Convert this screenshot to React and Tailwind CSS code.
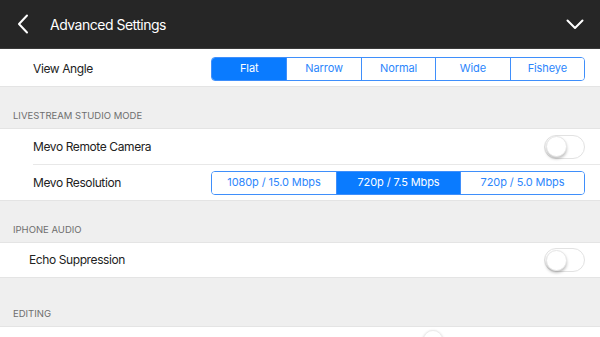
import React, { useState } from 'react';

const font = { fontFamily: 'Inter, "Liberation Sans", sans-serif' };

const Toggle = ({ on = false }) => (
    <div className={`w-[41px] h-[24px] rounded-full border border-[#e2e2e2] ${on ? 'bg-[#4cd964]' : 'bg-white'} flex items-center px-[1px]`}>
        <div className="w-[21px] h-[21px] rounded-full bg-white shadow-[0_2px_3px_rgba(0,0,0,0.25)] border border-[#e6e6e6]"></div>
    </div>
);

const Segmented = ({ options, selected, segWidth }) => (
    <div className="flex h-[24px] rounded-[4px] border border-[#3f8ffb] overflow-hidden">
        {options.map((opt, i) => (
            <div
                key={opt}
                className={`${segWidth} flex items-center justify-center text-[11px] tracking-[-0.1px] ${i > 0 ? 'border-l border-[#3f8ffb]' : ''} ${opt === selected ? 'bg-[#0a7bff] text-white' : 'bg-white text-[#2c86fc]'}`}
            >
                {opt}
            </div>
        ))}
    </div>
);

const SectionHeader = ({ title, height }) => (
    <div className={`${height} flex items-end pl-[13px] pb-[5px] bg-[#efefef] text-[9.5px] text-[#6e6e6e]`}>
        {title}
    </div>
);

const App = () => {
    const [angle] = useState('Flat');
    const [res] = useState('720p / 7.5 Mbps');

    return (
        <div className="w-[600px] h-[337px] overflow-hidden bg-[#efefef]" style={font}>
            {/* header */}
            <div className="h-[49px] bg-[#262626] border-b border-[#3a3a3a] flex items-center justify-between pl-[17px] pr-[16px]">
                <div className="flex items-center">
                    <svg width="12" height="20" viewBox="0 0 12 20" fill="none">
                        <path d="M10 1.5 L2 10 L10 18.5" stroke="white" strokeWidth="2" strokeLinecap="round" strokeLinejoin="round" />
                    </svg>
                    <span className="ml-[21px] text-[14px] tracking-[-0.5px] text-white">Advanced Settings</span>
                </div>
                <svg width="18" height="11" viewBox="0 0 18 11" fill="none">
                    <path d="M1.5 1.5 L9 9 L16.5 1.5" stroke="white" strokeWidth="2" strokeLinecap="round" strokeLinejoin="round" />
                </svg>
            </div>

            {/* view angle */}
            <div className="h-[38px] bg-white border-b border-[#e4e4e4] flex items-center justify-between pl-[33px] pr-[15px] pt-[2px]">
                <span className="text-[12px] tracking-[-0.4px] text-[#222]">View Angle</span>
                <Segmented options={['Flat', 'Narrow', 'Normal', 'Wide', 'Fisheye']} selected={angle} segWidth="w-[74.4px]" />
            </div>

            <SectionHeader title="LIVESTREAM STUDIO MODE" height="h-[41px]" />

            <div className="bg-white border-y border-[#e4e4e4]">
                <div className="pl-[33px]">
                    <div className="h-[36px] border-b border-[#e8e8e8] flex items-center justify-between pr-[15px]">
                        <span className="text-[12px] tracking-[-0.4px] text-[#222]">Mevo Remote Camera</span>
                        <Toggle />
                    </div>
                </div>
                <div className="h-[35px] flex items-center justify-between pl-[33px] pr-[15px]">
                    <span className="text-[12px] tracking-[-0.4px] text-[#222]">Mevo Resolution</span>
                    <Segmented options={['1080p / 15.0 Mbps', '720p / 7.5 Mbps', '720p / 5.0 Mbps']} selected={res} segWidth="w-[124px]" />
                </div>
            </div>

            <SectionHeader title="IPHONE AUDIO" height="h-[41px]" />

            <div className="h-[36px] bg-white border-y border-[#e4e4e4] flex items-center justify-between pl-[29px] pr-[15px]">
                <span className="text-[12px] tracking-[-0.4px] text-[#222]">Echo Suppression</span>
                <Toggle />
            </div>

            <SectionHeader title="EDITING" height="h-[48px]" />

            <div className="h-[40px] bg-white border-t border-[#e4e4e4] pl-[423px] pt-[3px]">
                <div className="w-[20px] h-[20px] rounded-full bg-white shadow-[0_1px_3px_rgba(0,0,0,0.2)] border border-[#ececec]"></div>
            </div>
        </div>
    );
};

export default App;
